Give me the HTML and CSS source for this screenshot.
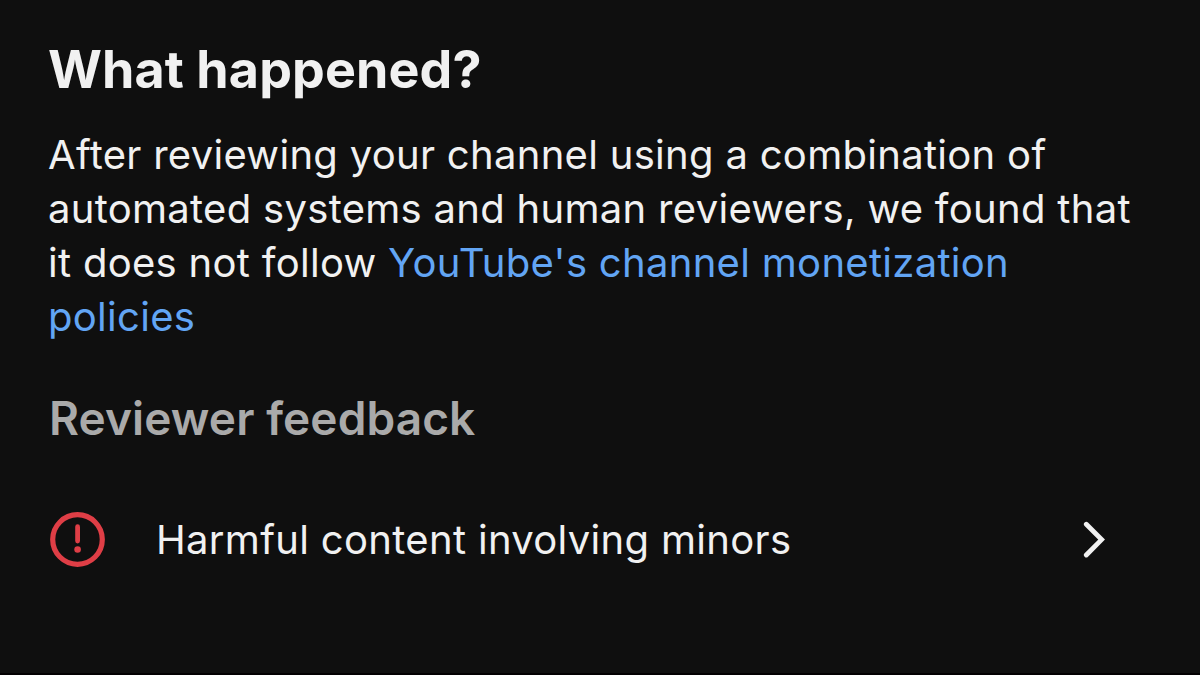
FILE: index.html
```html
<!DOCTYPE html>
<html lang="en">
<head>
    <meta charset="UTF-8">
    <meta name="viewport" content="width=device-width, initial-scale=1.0">
    <title>Channel monetization</title>
    <link rel="stylesheet" href="styles.css">
</head>
<body>
    <main>
        <h1>What happened?</h1>
        <p class="message">
            After reviewing your channel using a combination of<br>
            automated systems and human reviewers, we found that<br>
            it does not follow <a href="#">YouTube's channel monetization<br>
            policies</a>
        </p>

        <h2>Reviewer feedback</h2>
        <a href="#" class="feedback">
            <svg class="icon-alert" viewBox="0 0 56 56">
                <circle class="ring" cx="27.5" cy="28.5" r="24.8"/>
                <path class="mark" d="M27.6 15.7v14.4"/>
                <circle class="dot" cx="27.6" cy="38.5" r="3.3"/>
            </svg>
            <span class="feedback-text">Harmful content involving minors</span>
            <svg class="icon-arrow" viewBox="0 0 24 38">
                <path d="M4.3 4.2l15.3 15.4L4.3 35"/>
            </svg>
        </a>
    </main>
</body>
</html>
```
FILE: styles.css
```css
body {
    font-family: Inter, "Liberation Sans", sans-serif;
    margin: 0;
    background-color: #0f0f0f;
    color: #f1f1f1;
    height: 673px;
    border-bottom: 2px solid #030002;
    overflow: hidden;
}
main {
    padding: 39px 50px 0 48px;
}
h1 {
    margin: 0;
    font-size: 52px;
    line-height: 62px;
    font-weight: 700;
    letter-spacing: 0.1px;
    white-space: nowrap;
}
.message {
    margin: 27px 0 0;
    font-size: 40px;
    line-height: 54px;
    letter-spacing: 0.3px;
    white-space: nowrap;
}
a {
    color: #62a5f4;
    text-decoration: none;
}
h2 {
    margin: 46px 0 0 1px;
    font-size: 46px;
    line-height: 56px;
    font-weight: 600;
    letter-spacing: 0.1px;
    color: #aaa;
}
.feedback {
    display: flex;
    align-items: center;
    margin: 65px 0 0 2px;
    height: 56px;
    color: #f1f1f1;
    font-size: 40px;
    letter-spacing: 0.32px;
    white-space: nowrap;
}
.feedback-text {
    margin-left: 50px;
}
.icon-alert {
    width: 56px;
    height: 56px;
}
.ring {
    fill: none;
    stroke: #df3e46;
    stroke-width: 5.2;
}
.mark {
    fill: none;
    stroke: #df3e46;
    stroke-width: 4.8;
    stroke-linecap: round;
}
.dot {
    fill: #df3e46;
}
.icon-arrow {
    width: 24px;
    height: 38px;
    margin-left: auto;
    margin-right: 44px;
    fill: none;
    stroke: #f1f1f1;
    stroke-width: 4.8;
    stroke-linecap: round;
}
```
